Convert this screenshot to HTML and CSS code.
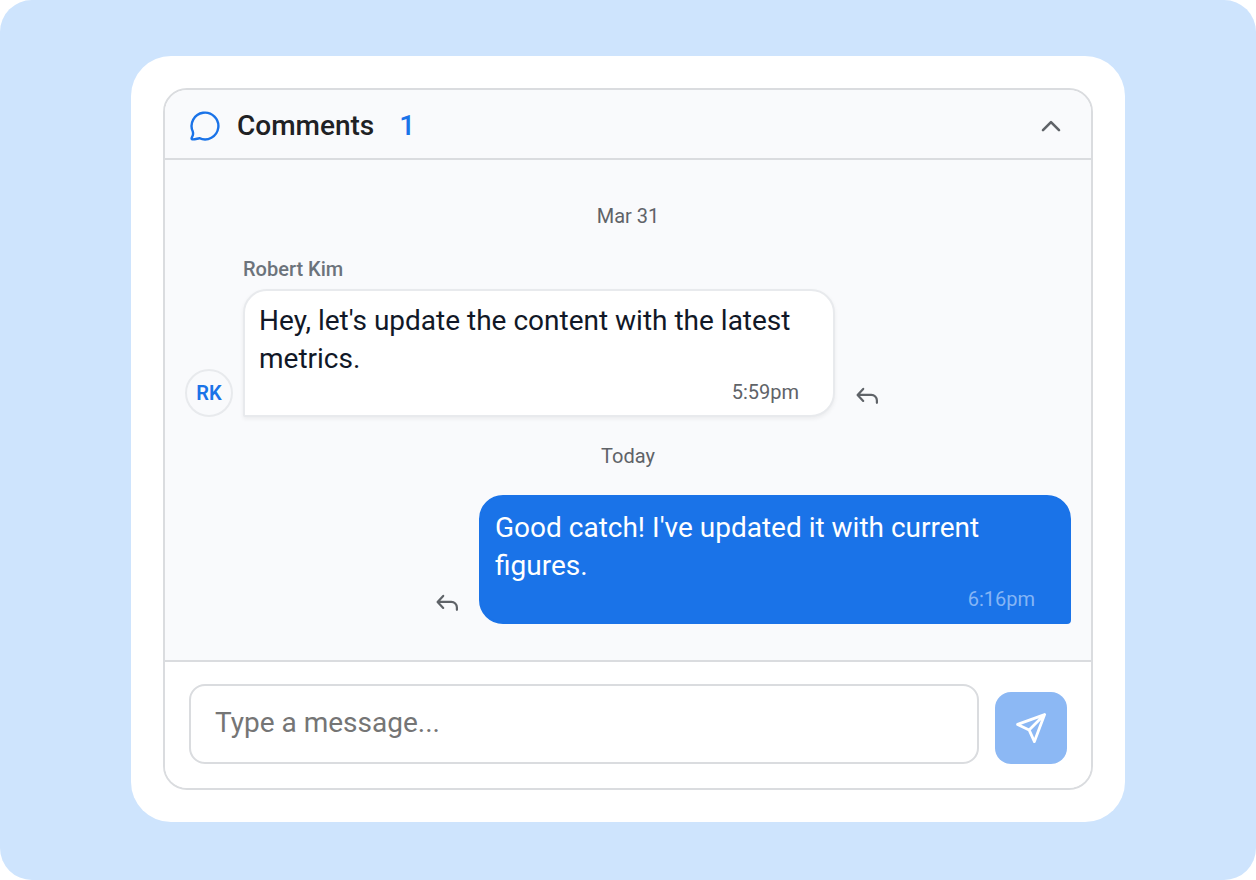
FILE: index.html
```html
<!DOCTYPE html>
<html lang="en">
<head>
<meta charset="utf-8">
<meta name="viewport" content="width=device-width, initial-scale=1">
<title>Comments</title>
<link rel="stylesheet" href="styles.css">
</head>
<body>
<main class="stage">
  <div class="card">
    <section class="panel" aria-labelledby="comments-title">
      <header class="panel-header">
        <svg class="bubble-icon" viewBox="0 0 32 32" aria-hidden="true"><path d="M3.8 21.6A13.4 13.4 0 1 1 10.4 28.2C8.2 28.5 5.4 29.7 3.2 29.3C1.6 28.8 3.6 26.4 3.9 24.9C4.1 23.8 4.2 22.8 3.8 21.6Z"/></svg>
        <h1 class="title" id="comments-title">Comments</h1>
        <span class="count">1</span>
        <button class="icon-button" type="button" aria-label="Collapse comments">
          <svg class="chevron" viewBox="0 0 24 24" aria-hidden="true"><path d="M4 16.2 12 8.2l8 8"/></svg>
        </button>
      </header>

      <div class="thread">
        <time class="date">Mar 31</time>
        <article class="message">
          <span class="author">Robert Kim</span>
          <div class="row">
            <span class="avatar">RK</span>
            <div class="bubble bubble-in">
              <p class="text">Hey, let's update the content with the latest metrics.</p>
              <time class="stamp">5:59pm</time>
            </div>
            <button class="reply" type="button" aria-label="Reply">
              <svg class="reply-icon" viewBox="0 0 24 20" aria-hidden="true"><path d="M8.2 2.9 2.6 8.9l5.6 6M3 8.9h13.3a5.6 5.6 0 0 1 5.6 5.6v2.3"/></svg>
            </button>
          </div>
        </article>
        <time class="date">Today</time>
        <article class="message">
          <div class="row row-own">
            <button class="reply" type="button" aria-label="Reply">
              <svg class="reply-icon" viewBox="0 0 24 20" aria-hidden="true"><path d="M8.2 2.9 2.6 8.9l5.6 6M3 8.9h13.3a5.6 5.6 0 0 1 5.6 5.6v2.3"/></svg>
            </button>
            <div class="bubble bubble-out">
              <p class="text">Good catch! I've updated it with current figures.</p>
              <time class="stamp">6:16pm</time>
            </div>
          </div>
        </article>
      </div>

      <form class="composer">
        <input class="field" type="text" placeholder="Type a message..." aria-label="Message">
        <button class="send" type="button" aria-label="Send">
          <svg class="send-icon" viewBox="0 0 32 32" aria-hidden="true"><path d="M29.6 2.6 2.6 12.4l11.5 5.5L19.4 29.6ZM29.6 2.6 14.1 17.9"/></svg>
        </button>
      </form>
    </section>
  </div>
</main>
</body>
</html>
```
FILE: styles.css
```css
* { box-sizing: border-box; }

body {
  margin: 0;
  background: #fff;
  color: #202124;
  font-family: Roboto, "Liberation Sans", sans-serif;
}

button, input { font: inherit; }

.stage {
  min-height: 100vh;
  padding: 56px 131px;
  border-radius: 32px;
  background: #cee4fd;
}

.card {
  padding: 32px;
  border-radius: 40px;
  background: #fff;
}

.panel {
  overflow: hidden;
  border: 2px solid #dadcdf;
  border-radius: 24px;
}

.panel-header {
  display: flex;
  align-items: center;
  height: 70px;
  padding: 3px 24px 0;
  border-bottom: 2px solid #dadcdf;
  background: #f9fafc;
}

.bubble-icon {
  width: 32px;
  height: 32px;
  margin-right: 16px;
  fill: none;
  stroke: #1a73e8;
  stroke-width: 2.4;
  stroke-linejoin: round;
}

.title {
  margin: 0;
  font-size: 28px;
  line-height: 36px;
  font-weight: 500;
}

.count {
  margin-left: 25px;
  color: #1a73e8;
  font-size: 28px;
  line-height: 36px;
  font-weight: 500;
}

.icon-button,
.reply {
  display: flex;
  padding: 0;
  border: 0;
  background: none;
}

.icon-button {
  margin-left: auto;
  padding: 4px;
}

.chevron {
  width: 24px;
  height: 24px;
  fill: none;
  stroke: #5f6368;
  stroke-width: 2.6;
  stroke-linecap: round;
  stroke-linejoin: round;
}

.thread {
  display: flex;
  flex-direction: column;
  gap: 25px;
  padding: 42px 20px 36px;
  background: #f9fafc;
}

.date {
  color: #5f6368;
  font-size: 20px;
  line-height: 28px;
  text-align: center;
}

.author {
  display: block;
  margin: 0 0 6px 58px;
  color: #6c737b;
  font-size: 20px;
  line-height: 28px;
  font-weight: 500;
}

.row {
  display: flex;
  align-items: flex-end;
}

.row-own { justify-content: flex-end; }

.avatar {
  display: flex;
  flex: none;
  align-items: center;
  justify-content: center;
  width: 48px;
  height: 48px;
  margin-right: 10px;
  border: 2px solid #e8eaed;
  border-radius: 50%;
  color: #1a73e8;
  font-size: 20px;
  font-weight: 600;
}

.bubble {
  flex: 0 1 592px;
  padding: 11px 14px 9px;
  border: 2px solid #e8eaed;
  font-size: 28px;
  line-height: 38px;
}

.bubble-in {
  border-radius: 24px 24px 24px 2px;
  background: #fff;
  color: #111827;
  box-shadow: 0 2px 4px rgba(0, 0, 0, 0.06);
}

.bubble-out {
  padding-top: 12px;
  border-color: #1a73e8;
  border-radius: 24px 24px 4px 24px;
  background: #1a73e8;
  color: #fff;
}

.text { margin: 0; }

.stamp {
  display: block;
  padding-right: 20px;
  color: #5f6368;
  font-size: 20px;
  line-height: 28px;
  text-align: right;
}

.bubble-out .stamp { color: #85b5f5; }

.reply {
  margin: 0 20px 11px;
}

.reply-icon {
  width: 24px;
  height: 20px;
  fill: none;
  stroke: #5f6368;
  stroke-width: 2.2;
  stroke-linecap: round;
  stroke-linejoin: round;
}

.composer {
  display: flex;
  align-items: flex-end;
  gap: 16px;
  padding: 22px 24px 24px;
  border-top: 2px solid #dadcdf;
  background: #fff;
}

.field {
  flex: 1;
  min-width: 0;
  height: 80px;
  padding: 0 24px 3px;
  border: 2px solid #dadcdf;
  border-radius: 16px;
  background: #fff;
  color: #202124;
  font-size: 28px;
}

.field::placeholder { color: #757575; opacity: 1; }

.send {
  display: flex;
  flex: none;
  align-items: center;
  justify-content: center;
  width: 72px;
  height: 72px;
  padding: 0;
  border: 0;
  border-radius: 16px;
  background: #8cb8f4;
}

.send-icon {
  width: 32px;
  height: 32px;
  fill: none;
  stroke: #fff;
  stroke-width: 2.8;
  stroke-linecap: round;
  stroke-linejoin: round;
}
```
